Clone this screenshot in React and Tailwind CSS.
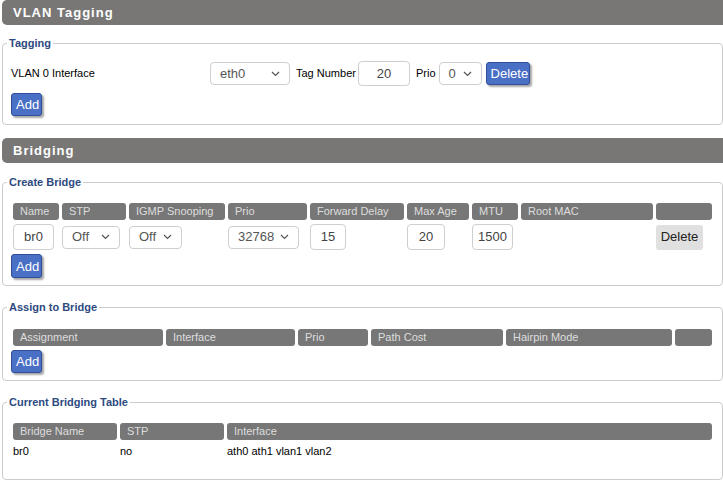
import React from "react";

const FONT = { fontFamily: '"Liberation Sans", Arial, sans-serif' };

function Chevron() {
  return (
    <svg width="9" height="6" viewBox="0 0 9 6" className="shrink-0">
      <path d="M1 1l3.5 3.5L8 1" fill="none" stroke="#555" strokeWidth="1.2" />
    </svg>
  );
}

function Select({ value, w, h = "h-[23px]" }) {
  return (
    <div
      className={`flex items-center justify-between ${h} rounded-[4px] border border-[#cfcfcf] bg-white pl-[9px] pr-[9px] text-[13px] text-[#555]`}
      style={{ width: w }}
    >
      <span>{value}</span>
      <Chevron />
    </div>
  );
}

function TextInput({ value, w, h = "h-[25px]" }) {
  return (
    <div
      className={`flex items-center justify-center ${h} rounded-[4px] border border-[#cfcfcf] bg-white text-[13px] text-[#444]`}
      style={{ width: w }}
    >
      {value}
    </div>
  );
}

function BlueButton({ children, className = "" }) {
  return (
    <button
      className={`h-[23px] rounded-[3px] border border-[#2f4f9a] bg-[#4a70c6] px-[4px] text-[13px] leading-none text-white shadow-[2px_2px_2px_rgba(0,0,0,0.35)] ${className}`}
    >
      {children}
    </button>
  );
}

function SectionHeader({ title, className = "" }) {
  return (
    <div
      className={`ml-[2px] flex h-[25px] w-[740px] items-center rounded-[5px] bg-[#787776] pl-[11px] text-[13px] font-bold tracking-[1px] text-white ${className}`}
    >
      {title}
    </div>
  );
}

function Fieldset({ legend, children, className = "" }) {
  return (
    <fieldset
      className={`ml-[2px] w-[721px] rounded-[4px] border border-[#cccccc] px-[8px] ${className}`}
    >
      <legend className="ml-[-4px] px-[2px] text-[11px] font-bold leading-[13px] text-[#2d4a80]">
        {legend}
      </legend>
      {children}
    </fieldset>
  );
}

function HeadRow({ cols }) {
  return (
    <div className="ml-[2px] flex gap-[3px]">
      {cols.map(([label, w], i) => (
        <div
          key={i}
          className="flex h-[17px] items-center rounded-[3px] bg-[#777777] pl-[7px] text-[11px] text-[#dedede]"
          style={{ width: w }}
        >
          {label}
        </div>
      ))}
    </div>
  );
}

export default function App() {
  const createCols = [
    ["Name", 46],
    ["STP", 64],
    ["IGMP Snooping", 96],
    ["Prio", 79],
    ["Forward Delay", 94],
    ["Max Age", 62],
    ["MTU", 46],
    ["Root MAC", 132],
    ["", 56],
  ];
  const assignCols = [
    ["Assignment", 150],
    ["Interface", 129],
    ["Prio", 70],
    ["Path Cost", 132],
    ["Hairpin Mode", 166],
    ["", 37],
  ];
  const tableCols = [
    ["Bridge Name", 104],
    ["STP", 104],
    ["Interface", 485],
  ];

  return (
    <div className="h-[482px] w-[723px] overflow-hidden bg-white text-black" style={FONT}>
      <SectionHeader title="VLAN Tagging" />

      <Fieldset legend="Tagging" className="mt-[12px] h-[88px]">
        <div className="mt-[11px] flex h-[25px] items-center">
          <div className="w-[199px] text-[11px] leading-none">VLAN 0 Interface</div>
          <Select value="eth0" w={80} />
          <span className="ml-[6px] w-[56px] whitespace-nowrap text-[11px]">Tag Number</span>
          <span className="ml-[6px]">
            <TextInput value="20" w={52} />
          </span>
          <span className="ml-[6px] text-[11px]">Prio</span>
          <span className="ml-[3px]">
            <Select value="0" w={43} />
          </span>
          <BlueButton className="ml-[4px] w-[44px]">Delete</BlueButton>
        </div>
        <BlueButton className="mt-[7px] w-[31px]">Add</BlueButton>
      </Fieldset>

      <SectionHeader title="Bridging" className="mt-[13px] h-[24px]" />

      <Fieldset legend="Create Bridge" className="mt-[13px] h-[110px]">
        <div className="mt-[14px]">
          <HeadRow cols={createCols} />
        </div>
        <div className="ml-[2px] mt-[4px] flex h-[26px] items-center gap-[3px]">
          <div style={{ width: 46 }}>
            <TextInput value="br0" w={41} h="h-[26px]" />
          </div>
          <div style={{ width: 64 }}>
            <Select value="Off" w={58} />
          </div>
          <div style={{ width: 96 }}>
            <Select value="Off" w={53} />
          </div>
          <div style={{ width: 79 }}>
            <Select value="32768" w={71} />
          </div>
          <div style={{ width: 94 }}>
            <TextInput value="15" w={36} h="h-[26px]" />
          </div>
          <div style={{ width: 62 }}>
            <TextInput value="20" w={38} h="h-[26px]" />
          </div>
          <div style={{ width: 46 }}>
            <TextInput value="1500" w={41} h="h-[26px]" />
          </div>
          <div style={{ width: 132 }} />
          <div style={{ width: 56 }}>
            <button className="h-[25px] w-[47px] rounded-[3px] bg-[#e0e0e0] text-[13px] text-[#222]">
              Delete
            </button>
          </div>
        </div>
        <BlueButton className="mt-[4px] w-[31px] h-[24px]">Add</BlueButton>
      </Fieldset>

      <Fieldset legend="Assign to Bridge" className="mt-[15px] h-[80px]">
        <div className="mt-[15px]">
          <HeadRow cols={assignCols} />
        </div>
        <BlueButton className="mt-[4px] w-[31px]">Add</BlueButton>
      </Fieldset>

      <Fieldset legend="Current Bridging Table" className="mt-[15px] h-[84px]">
        <div className="mt-[14px]">
          <HeadRow cols={tableCols} />
        </div>
        <div className="ml-[2px] mt-[3px] flex gap-[3px] text-[11px]">
          <div style={{ width: 104 }}>br0</div>
          <div style={{ width: 104 }}>no</div>
          <div style={{ width: 485 }}>ath0 ath1 vlan1 vlan2</div>
        </div>
      </Fieldset>
    </div>
  );
}
